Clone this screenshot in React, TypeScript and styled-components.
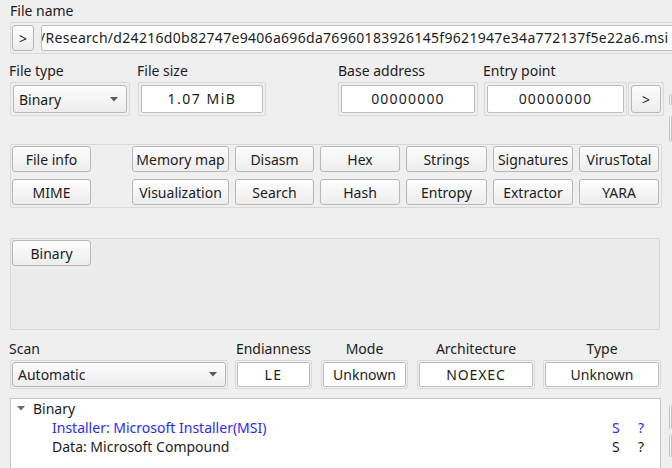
import styled, { createGlobalStyle } from "styled-components";

const GlobalStyle = createGlobalStyle`
  html, body { margin:0; padding:0; background:#efefef; overflow:hidden; }
  body { font-family:"Noto Sans", "DejaVu Sans", sans-serif; font-size:14px; color:#1c1c1c; }
  * { box-sizing:border-box; }
`;

const FILE_PATH =
  "/Research/d24216d0b82747e9406a696da76960183926145f9621947e34a772137f5e22a6.msi";

const TOOLS = [
  ["Memory map", "Disasm", "Hex", "Strings", "Signatures", "VirusTotal"],
  ["Visualization", "Search", "Hash", "Entropy", "Extractor", "YARA"],
];

// Qt-style dropdown arrow
function ComboArrow() {
  return (
    <svg width="8" height="5" viewBox="0 0 8 5">
      <polygon points="0,0 8,0 4,4.5" fill="#5a5a5a" />
    </svg>
  );
}

export default function App() {
  return (
    <Window>
      <GlobalStyle />
      <Label $pad="1px">File name</Label>
      <FileRow>
        <PushButton $w={22} $h={26}>&gt;</PushButton>
        <PathBox>
          <PathText>{FILE_PATH}</PathText>
        </PathBox>
      </FileRow>

      <Body>
        <Main>
          <FieldRow $top={7}>
            <Field>
              <Label $pad="0">File type</Label>
              <Frame $pad={2}>
                <Combo $w={114} $h={28}>
                  Binary
                  <ComboArrow />
                </Combo>
              </Frame>
            </Field>
            <Field $gap={8}>
              <Label $pad="0">File size</Label>
              <Frame $pad={2}>
                <ValueBox $w={122} $h={28} $ls={1.5}>1.07 MiB</ValueBox>
              </Frame>
            </Field>
            <Field $gap={72}>
              <Label $pad="1px">Base address</Label>
              <Frame $pad={2}>
                <ValueBox $w={134} $h={28} $ls={1.2}>00000000</ValueBox>
              </Frame>
            </Field>
            <Field $gap={6}>
              <Label $pad="0">Entry point</Label>
              <Frame $pad={2}>
                <ValueBox $w={137} $h={28} $ls={1.2}>00000000</ValueBox>
              </Frame>
            </Field>
            <Field $gap={1}>
              <Label $pad="0">&nbsp;</Label>
              <Frame $pad={2}>
                <PushButton $w={30} $h={28}>&gt;</PushButton>
              </Frame>
            </Field>
          </FieldRow>

          <ToolFrame>
            <ToolColumn>
              <PushButton $w={79} $h={26}>File info</PushButton>
              <PushButton $w={79} $h={26}>MIME</PushButton>
            </ToolColumn>
            <ToolGrid>
              {TOOLS.flat().map((t) => (
                <PushButton key={t} $h={26}>{t}</PushButton>
              ))}
            </ToolGrid>
          </ToolFrame>

          <TypePanel>
            <PushButton $w={79} $h={26}>Binary</PushButton>
          </TypePanel>

          <FieldRow $top={9}>
            <Field>
              <Label $pad="0">Scan</Label>
              <Frame $pad={1}>
                <Combo $w={214} $h={25}>
                  Automatic
                  <ComboArrow />
                </Combo>
              </Frame>
            </Field>
            <Field $gap={7} $center>
              <Label $pad="0">Endianness</Label>
              <Frame $pad={1}>
                <ValueBox $w={73} $h={25} $ls={1.5}>LE</ValueBox>
              </Frame>
            </Field>
            <Field $gap={9} $center>
              <Label $pad="0">Mode</Label>
              <Frame $pad={1}>
                <ValueBox $w={83} $h={25}>Unknown</ValueBox>
              </Frame>
            </Field>
            <Field $gap={9} $center>
              <Label $pad="0">Architecture</Label>
              <Frame $pad={1}>
                <ValueBox $w={114} $h={25} $ls={0.9}>NOEXEC</ValueBox>
              </Frame>
            </Field>
            <Field $gap={8} $center>
              <Label $pad="0">Type</Label>
              <Frame $pad={1}>
                <ValueBox $w={114} $h={25}>Unknown</ValueBox>
              </Frame>
            </Field>
          </FieldRow>

          <Tree>
            <TreeRow>
              <TreeName $level={0}>
                <svg width="8" height="5" viewBox="0 0 8 5">
                  <polygon points="0,0 8,0 4,4.5" fill="#6a6a6a" />
                </svg>
                Binary
              </TreeName>
            </TreeRow>
            <TreeRow $link>
              <TreeName $level={1}>Installer: Microsoft Installer(MSI)</TreeName>
              <TreeCell $w={26}>S</TreeCell>
              <TreeCell $w={22}>?</TreeCell>
            </TreeRow>
            <TreeRow>
              <TreeName $level={1}>Data: Microsoft Compound</TreeName>
              <TreeCell $w={26}>S</TreeCell>
              <TreeCell $w={22}>?</TreeCell>
            </TreeRow>
          </Tree>
        </Main>

        <Side>
          <SideBox $h={11} $top={40} />
          <SideBox $h={26} $top={11} />
          <SideBox $h={24} $top={263} />
          <SideBox $h={23} $top={5} />
        </Side>
      </Body>
    </Window>
  );
}

const Window = styled.div`
  width:672px; height:468px; overflow:hidden; padding-top:1px;
`;

const Label = styled.div<{ $pad: string }>`
  height:19px; line-height:19px; white-space:nowrap;
  padding-left:${({ $pad }) => $pad};
  margin:0 0 2px 9px;
`;

const FileRow = styled.div`
  display:flex; gap:7px; align-items:center;
  margin-left:10px; width:720px; height:32px; padding:2px 1px;
  border:1px solid #d9d9d9; border-radius:2px;
`;

const PathBox = styled.div`
  flex:1; height:26px; overflow:hidden; white-space:nowrap;
  background:#fff; border:1px solid #bdbdbd; border-radius:2px;
  padding:0 1px; line-height:24px;
`;

const PathText = styled.span`
  display:inline-block; margin-left:-3px; letter-spacing:0.3px;
`;

const Body = styled.div`
  display:flex; align-items:flex-start;
`;

const Main = styled.div`
  width:662px; padding-left:10px; display:flex; flex-direction:column;
`;

const FieldRow = styled.div<{ $top: number }>`
  display:flex; margin-top:${({ $top }) => $top}px;
`;

const Field = styled.div<{ $gap?: number; $center?: boolean }>`
  display:flex; flex-direction:column;
  margin-left:${({ $gap }) => $gap ?? 0}px;
  & > div:first-child {
    margin-left:${({ $center }) => ($center ? "0" : "-1px")};
    text-align:${({ $center }) => ($center ? "center" : "left")};
  }
`;

const Frame = styled.div<{ $pad: number }>`
  display:flex; padding:${({ $pad }) => $pad}px;
  border:1px solid #d9d9d9; border-radius:2px;
`;

const PushButton = styled.button<{ $w?: number; $h: number }>`
  width:${({ $w }) => ($w ? `${$w}px` : "auto")}; height:${({ $h }) => $h}px;
  padding:0; font:inherit; color:#1c1c1c; white-space:nowrap;
  border:1px solid #b7b7b7; border-radius:3px;
  background:linear-gradient(#fdfdfd, #ededed);
`;

const Combo = styled(PushButton)`
  display:flex; align-items:center; justify-content:space-between;
  padding:0 8px 0 5px; text-align:left;
`;

const ValueBox = styled.div<{ $w: number; $h: number; $ls?: number }>`
  width:${({ $w }) => $w}px; height:${({ $h }) => $h}px;
  line-height:${({ $h }) => $h - 2}px; text-align:center; white-space:nowrap;
  letter-spacing:${({ $ls }) => $ls ?? 0}px;
  background:#fff; border:1px solid #bdbdbd; border-radius:2px;
`;

const ToolFrame = styled.div`
  display:flex; gap:41px; width:652px; margin-top:28px;
  padding:1px 2px 2px 1px; border:1px solid #d9d9d9; border-radius:2px;
`;

const ToolColumn = styled.div`
  display:flex; flex-direction:column; gap:7px;
`;

const ToolGrid = styled.div`
  display:grid; grid-template-columns:97px 79px 80px 81px 80px 80px;
  column-gap:6px; row-gap:7px;
`;

const TypePanel = styled.div`
  width:650px; height:92px; margin-top:30px; padding:1px;
  background:#ececec; border:1px solid #d6d6d6; border-radius:2px;
`;

const Tree = styled.div`
  width:651px; height:80px; margin-top:9px;
  background:#fff; border:1px solid #c6c6c6;
`;

const TreeRow = styled.div<{ $link?: boolean }>`
  display:flex; height:19px; line-height:19px;
  color:${({ $link }) => ($link ? "#2a2aff" : "#1c1c1c")};
`;

const TreeName = styled.div<{ $level: number }>`
  flex:1; display:flex; align-items:center; gap:8px; white-space:nowrap;
  padding-left:${({ $level }) => ($level ? 41 : 6)}px;
`;

const TreeCell = styled.div<{ $w: number }>`
  width:${({ $w }) => $w}px;
`;

const Side = styled.div`
  display:flex; flex-direction:column; margin-left:7px; width:40px;
`;

const SideBox = styled.div<{ $h: number; $top: number }>`
  height:${({ $h }) => $h}px; margin-top:${({ $top }) => $top}px;
  border:1px solid #c4c4c4; border-radius:2px;
  background:linear-gradient(#fbfbfb, #ededed);
`;
